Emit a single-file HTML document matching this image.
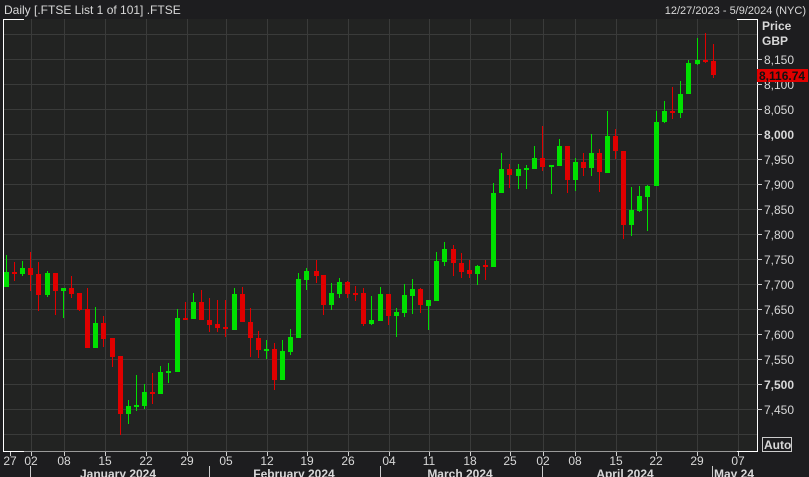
<!DOCTYPE html>
<html><head><meta charset="utf-8"><style>
body{margin:0;background:#1d1d1f;width:809px;height:477px;overflow:hidden;font-family:"Liberation Sans",sans-serif}
svg{position:absolute;left:0;top:0}
text{font-family:"Liberation Sans",sans-serif;fill:#d8d8d8}
</style></head><body>
<svg width="809" height="477" id="s">
<rect x="0" y="0" width="809" height="477" fill="#1d1d1f"/>
<rect x="3" y="19" width="754" height="432" fill="#222322"/>
<g id="grid" stroke="#3a3b3a" stroke-width="1"></g>
<g id="c"></g>
<line x1="3.5" y1="19" x2="3.5" y2="451" stroke="#fff"/>
<line x1="3" y1="451.5" x2="757" y2="451.5" stroke="#999"/>
<line x1="757.5" y1="19" x2="757.5" y2="452" stroke="#fff"/>
<line x1="3" y1="19.5" x2="24" y2="19.5" stroke="#fff"/>
<line x1="737" y1="19.5" x2="757" y2="19.5" stroke="#fff"/>
<line x1="3" y1="451.5" x2="24" y2="451.5" stroke="#fff"/>
<line x1="737" y1="451.5" x2="757" y2="451.5" stroke="#fff"/>
<text x="4" y="14" font-size="12">Daily [.FTSE List 1 of 101] .FTSE</text>
<text x="806" y="14" font-size="11" text-anchor="end">12/27/2023 - 5/9/2024 (NYC)</text>
<text x="762" y="30" font-size="12" font-weight="bold">Price</text>
<text x="762" y="45" font-size="12" font-weight="bold">GBP</text>
<g id="yl" font-size="12"></g>
<rect x="757" y="69" width="51" height="13" fill="#e00000"/>
<text x="759" y="80" font-size="12" font-weight="bold" fill="#111" style="fill:#111">8,116.74</text>
<rect x="762.5" y="437.5" width="29" height="14" fill="none" stroke="#ccc"/>
<text x="764" y="449" font-size="12" font-weight="bold">Auto</text>
<g id="xl" font-size="12"></g>
<g font-size="12" font-weight="bold" text-anchor="middle">
<text x="118" y="478">January 2024</text>
<text x="294" y="478">February 2024</text>
<text x="460" y="478">March 2024</text>
<text x="625" y="478">April 2024</text>
<text x="734" y="478">May 24</text>
</g>
<g stroke="#ccc"><line x1="30.5" y1="466" x2="30.5" y2="477"/><line x1="209.5" y1="466" x2="209.5" y2="477"/><line x1="380.5" y1="466" x2="380.5" y2="477"/><line x1="542.5" y1="466" x2="542.5" y2="477"/><line x1="712.5" y1="466" x2="712.5" y2="477"/></g>
</svg>
<script>
var ns="http://www.w3.org/2000/svg";
function el(p,t,a,tx){var e=document.createElementNS(ns,t);for(var k in a)e.setAttribute(k,a[k]);if(tx)e.textContent=tx;p.appendChild(e);}
var g=document.getElementById('grid');
var xs=[10,31,64,105,146,187,226,267,307,348,389,429,470,510,543,575,616,656,697,738];
var labs=["27","02","08","15","22","29","05","12","19","26","04","11","18","25","02","08","15","22","29","07"];
xs.forEach(function(x,i){ if(i>0) el(g,'line',{x1:x+.5,y1:19,x2:x+.5,y2:451});
 el(document.getElementById('xl'),'text',{x:x,y:465,'text-anchor':'middle'},labs[i]);
 el(document.getElementById('s'),'line',{x1:x+.5,y1:452,x2:x+.5,y2:456,stroke:'#ccc'});});
var yl=document.getElementById('yl');
for(var p=8200;p>=7400;p-=50){var y=59+(8150-p)/2;el(g,'line',{x1:3,y1:y+.5,x2:757,y2:y+.5});
 if(p<=8150&&p>=7450){el(document.getElementById('s'),'line',{x1:757,y1:y+.5,x2:762,y2:y+.5,stroke:'#ccc'});
 var s=String(p);el(yl,'text',{x:764,y:y+5,'font-weight':(p==8000||p==7500)?'bold':'normal'},s[0]+','+s.slice(1));}}
var G='#00e000',R='#e00000';
var c=[[6,255,287,272,287,G],[14,262,281,272,274,R],[22,261,276,268,274,G],[30,252,291,268,275,R],[38,262,311,274,295,R],[47,271,297,273,295,G],[55,273,315,273,291,R],[63,288,318,288,291,G],[71,276,298,288,294,R],[79,293,311,293,310,R],[87,288,348,309,348,R],[95,307,348,323,348,G],[103,316,347,323,339,R],[112,338,367,338,357,R],[120,356,435,356,414,R],[128,400,424,406,414,G],[136,375,411,405,407,G],[144,384,409,392,406,G],[152,373,404,392,394,R],[160,366,394,372,394,G],[168,363,383,371,373,G],[177,309,372,318,372,G],[185,302,320,318,320,R],[193,293,319,302,319,G],[201,290,320,302,320,R],[209,298,332,320,325,R],[217,300,332,324,328,R],[225,300,337,327,329,R],[234,288,330,294,330,G],[242,287,322,294,322,R],[250,308,357,322,338,R],[258,331,358,338,350,R],[266,340,359,349,350,G],[274,343,390,349,380,R],[282,340,380,351,380,G],[290,329,355,337,352,G],[298,273,338,279,338,G],[306,268,290,271,280,G],[316,260,283,271,276,R],[323,275,315,275,305,R],[331,283,310,293,305,G],[339,278,298,282,294,G],[347,281,298,282,294,R],[355,286,301,293,294,R],[363,288,326,293,324,R],[371,296,325,320,324,G],[380,287,321,294,321,G],[388,294,325,294,316,R],[396,308,337,312,316,G],[404,284,317,295,313,G],[412,279,314,289,296,G],[420,288,313,289,305,R],[428,300,330,300,306,G],[436,252,301,261,301,G],[444,242,266,249,262,G],[453,245,276,249,263,R],[461,253,278,263,272,R],[469,260,278,270,274,R],[477,265,285,266,274,G],[485,260,280,265,266,R],[493,183,267,193,267,G],[501,153,193,169,193,G],[509,164,188,169,175,R],[518,164,189,169,176,G],[526,165,189,168,170,G],[534,146,169,158,169,G],[542,126,171,158,167,R],[551,165,194,165,167,G],[559,139,166,146,166,G],[567,146,193,146,180,R],[575,158,191,162,180,G],[583,153,176,162,168,R],[591,134,176,153,168,G],[599,149,192,153,172,R],[607,111,173,136,173,G],[615,129,159,136,151,R],[623,151,239,151,225,R],[631,187,236,210,225,G],[639,186,212,196,211,G],[647,185,231,186,197,G],[656,111,186,122,186,G],[664,101,123,111,122,G],[672,87,119,111,113,R],[680,81,118,94,113,G],[688,60,94,63,94,G],[697,38,65,60,64,G],[705,33,63,60,61,R],[713,44,78,61,75,R]];
var cg=document.getElementById('c');
c.forEach(function(k){el(cg,'rect',{x:k[0],y:k[1],width:1,height:k[2]-k[1],fill:k[5]});
 el(cg,'rect',{x:k[0]-2,y:k[3],width:5,height:Math.max(2,k[4]-k[3]),fill:k[5]});});
</script>
</body></html>
